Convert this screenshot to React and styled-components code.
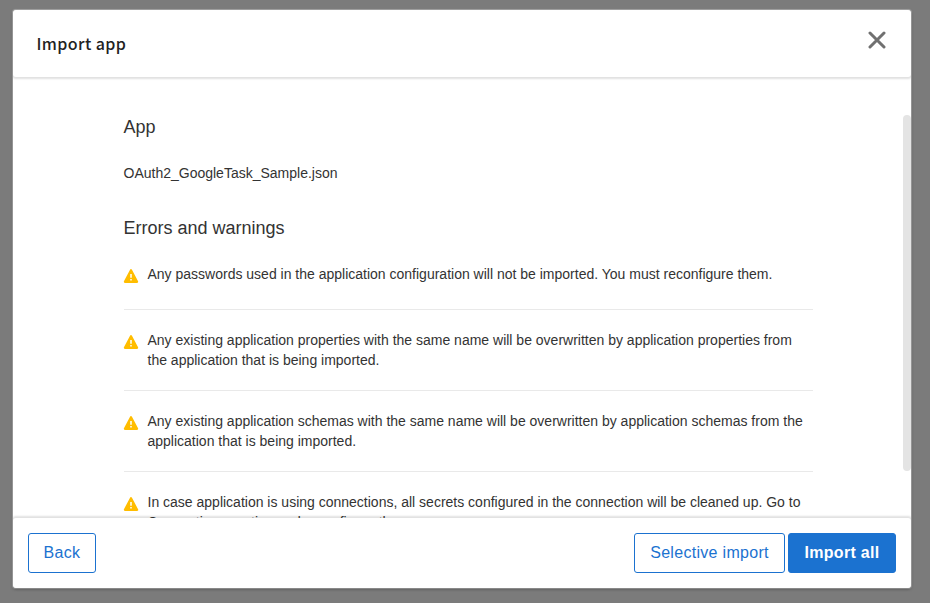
import React from "react";
import styled, { createGlobalStyle } from "styled-components";

const GlobalStyle = createGlobalStyle`
  * { box-sizing: border-box; }
  html, body { margin: 0; height: 100%; overflow: hidden; }
  body {
    background: #7b7b7b;
    font-family: "Liberation Sans", Arial, sans-serif;
    color: #333;
  }
`;

const Backdrop = styled.div`
  height: 603px;
  padding: 10px 19px 15px 13px;
`;

const Dialog = styled.section`
  display: flex;
  flex-direction: column;
  height: 578px;
  background: #fff;
  border-radius: 3px;
  box-shadow: 0 0 1px 1px rgba(255, 255, 255, 0.35), 0 1px 3px rgba(0, 0, 0, 0.5);
  overflow: hidden;
`;

const Header = styled.header`
  z-index: 1;
  flex: 0 0 67px;
  display: flex;
  align-items: center;
  justify-content: space-between;
  padding: 0 25px 0 23.5px;
  background: #fff;
  border-radius: 3px;
  box-shadow: 0 1px 2px 1px rgba(0, 0, 0, 0.12);
`;

const Title = styled.h1`
  margin: -2px 0 0;
  font: 500 16px/24px "Noto Sans CJK JP", "Noto Sans", sans-serif;
  letter-spacing: 0.4px;
  color: #222;
`;

const CloseButton = styled.button`
  display: flex;
  margin: -7px 0 0;
  padding: 0;
  border: 0;
  background: none;
  color: #707070;
`;

const Body = styled.div`
  flex: 1;
  min-height: 0;
  display: flex;
  justify-content: space-between;
  overflow: hidden;
`;

const Content = styled.main`
  width: 689px;
  margin-left: 110.5px;
  padding-top: 38px;
`;

const SectionTitle = styled.h2`
  margin: 0;
  font-size: 18px;
  font-weight: 400;
  line-height: 24px;
`;

const FileName = styled.p`
  margin: 24px 0 33px;
  font-size: 14px;
  line-height: 20px;
`;

const WarningList = styled.ul`
  margin: 24px 0 0;
  padding: 0;
  list-style: none;
`;

const WarningItem = styled.li`
  display: flex;
  gap: 9px;
  margin-bottom: 20px;
  padding-bottom: ${(p) => (p.$single ? 25 : 20)}px;
  border-bottom: 1px solid #e9e9e9;
  font-size: 14px;
  line-height: 20px;

  svg { flex: none; margin-top: 5px; overflow: visible; }
`;

const ScrollThumb = styled.div`
  width: 8px;
  height: 356px;
  margin-top: 38px;
  background: #e4e4e4;
  border-radius: 4px;
`;

const Footer = styled.footer`
  z-index: 1;
  flex: 0 0 70px;
  display: flex;
  align-items: flex-start;
  gap: 3px;
  padding: 15px 15px 0;
  background: #fff;
  border-radius: 3px;
  box-shadow: 0 -1px 2px 1px rgba(0, 0, 0, 0.12);
`;

const Button = styled.button`
  width: ${(p) => p.$width}px;
  height: 40px;
  margin: 0;
  margin-right: ${(p) => (p.$pushRest ? "auto" : 0)};
  padding: 0 0 1px;
  border: 1px solid #1b72d0;
  border-radius: 3px;
  background: ${(p) => (p.$primary ? "#1b72d0" : "#fff")};
  color: ${(p) => (p.$primary ? "#fff" : "#1b72d0")};
  font: ${(p) => (p.$primary ? 700 : 400)} 16px/20px "Liberation Sans", Arial, sans-serif;
  letter-spacing: 0.3px;
  white-space: nowrap;
`;

const WarningIcon = () => (
  <svg width="15" height="14" viewBox="0.5 0 15 14" aria-hidden="true">
    <path d="M7.5 1.2 13.6 12.8H1.4Z" fill="#ffbd00" stroke="#ffbd00" strokeWidth="2.2" strokeLinejoin="round" />
    <path d="M7.5 4.9v3.9M7.5 10v1.5" stroke="#fff" strokeWidth="1.5" />
  </svg>
);

const CloseIcon = () => (
  <svg width="18" height="18" viewBox="0 0 18 18" aria-hidden="true">
    <path d="m2 2 14 14M16 2 2 16" stroke="currentColor" strokeWidth="3" strokeLinecap="round" />
  </svg>
);

const warnings = [
  ["Any passwords used in the application configuration will not be imported. You must reconfigure them."],
  ["Any existing application properties with the same name will be overwritten by application properties from", "the application that is being imported."],
  ["Any existing application schemas with the same name will be overwritten by application schemas from the", "application that is being imported."],
  ["In case application is using connections, all secrets configured in the connection will be cleaned up. Go to", "Connections section and reconfigure them."],
];

export default function App() {
  return (
    <>
      <GlobalStyle />
      <Backdrop>
        <Dialog role="dialog" aria-label="Import app">
          <Header>
            <Title>Import app</Title>
            <CloseButton aria-label="Close"><CloseIcon /></CloseButton>
          </Header>
          <Body>
            <Content>
              <SectionTitle>App</SectionTitle>
              <FileName>OAuth2_GoogleTask_Sample.json</FileName>
              <SectionTitle>Errors and warnings</SectionTitle>
              <WarningList>
                {warnings.map((lines) => (
                  <WarningItem key={lines[0]} $single={lines.length === 1}>
                    <WarningIcon />
                    <span>
                      {lines.map((line, i) => (
                        <React.Fragment key={line}>
                          {i > 0 && <br />}
                          {line}
                        </React.Fragment>
                      ))}
                    </span>
                  </WarningItem>
                ))}
              </WarningList>
            </Content>
            <ScrollThumb />
          </Body>
          <Footer>
            <Button $width={68} $pushRest>Back</Button>
            <Button $width={151}>Selective import</Button>
            <Button $width={108} $primary>Import all</Button>
          </Footer>
        </Dialog>
      </Backdrop>
    </>
  );
}
